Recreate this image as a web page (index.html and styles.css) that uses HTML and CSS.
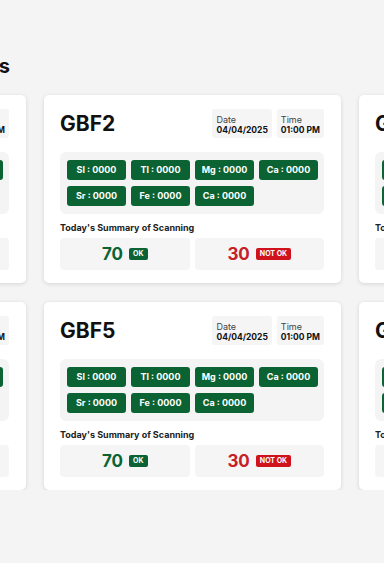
FILE: index.html
```html
<!DOCTYPE html>
<html>
<head>
  <title>Machines</title>
  <link rel="stylesheet" href="styles.css">
</head>
<body>
<div class="page">
  <h2 class="page-title">Machines</h2>

  <div class="cards" id="cards"></div>
</div>

<script>
  const elements = ["Sl", "Tl", "Mg", "Ca", "Sr", "Fe", "Ca"];
  const machines = ["GBF1", "GBF2", "GBF3", "GBF4", "GBF5", "GBF6"];

  function machineCard(name) {
    const chips = elements.map(el => `<div class="chip">${el} : 0000</div>`).join("");
    return `
      <div class="card">
        <div class="card-head">
          <div class="card-title">${name}</div>
          <div class="meta">
            <div class="meta-box"><div class="meta-label">Date</div><div class="meta-value">04/04/2025</div></div>
            <div class="meta-box"><div class="meta-label">Time</div><div class="meta-value">01:00 PM</div></div>
          </div>
        </div>
        <div class="chips">${chips}</div>
        <div class="summary-title">Today's Summary of Scanning</div>
        <div class="summary">
          <div class="summary-box"><span class="count ok">70</span><span class="badge ok-badge">OK</span></div>
          <div class="summary-box"><span class="count bad">30</span><span class="badge bad-badge">NOT OK</span></div>
        </div>
      </div>`;
  }

  document.getElementById("cards").innerHTML = machines.map(machineCard).join("");
</script>
</body>
</html>
```

FILE: styles.css
```css
body {
  font-family: Inter, "Noto Sans", sans-serif;
  margin: 0;
  padding: 0;
  background: #f4f4f4;
  overflow: hidden;
}
.page {
  margin-left: -271px;
  width: 927px;
  padding-top: 54px;
}
.page-title {
  width: 281px;
  text-align: right;
  font-size: 20px;
  line-height: 24px;
  font-weight: 700;
  color: #111;
  margin: 0 0 17px 0;
}
.cards {
  display: grid;
  grid-template-columns: repeat(3, 297px);
  gap: 19px 18px;
}
.card {
  background: #fff;
  border-radius: 5px;
  box-shadow: 0 1px 4px rgba(0, 0, 0, 0.13);
  padding: 14px 17px 13px 16px;
  box-sizing: border-box;
  height: 188px;
}
.card-head {
  display: flex;
  justify-content: space-between;
  align-items: center;
}
.card-title {
  font-size: 21px;
  font-weight: 700;
  color: #111;
}
.meta {
  display: flex;
  gap: 5px;
}
.meta-box {
  background: #f5f5f5;
  border-radius: 3px;
  padding: 5px 4px 2px 4px;
  font-size: 9px;
  line-height: 11px;
}
.meta-label {
  color: #444;
}
.meta-value {
  font-size: 8.5px;
  font-weight: 700;
  color: #111;
}
.chips {
  margin-top: 14px;
  background: #f4f4f4;
  border-radius: 6px;
  padding: 8px 6px 8px 7px;
  display: grid;
  grid-template-columns: repeat(4, 1fr);
  gap: 6px 5px;
}
.chip {
  background: #0b6334;
  color: #fff;
  border-radius: 3px;
  height: 20px;
  line-height: 20px;
  text-align: center;
  font-size: 9px;
  font-weight: 700;
}
.summary-title {
  margin-top: 8px;
  font-size: 9px;
  line-height: 12px;
  font-weight: 700;
  color: #222;
}
.summary {
  margin-top: 4px;
  display: grid;
  grid-template-columns: 1fr 1fr;
  gap: 5px;
}
.summary-box {
  background: #f5f5f5;
  border-radius: 4px;
  height: 32px;
  display: flex;
  align-items: center;
  justify-content: center;
  gap: 6px;
}
.count {
  font-size: 17px;
  font-weight: 700;
}
.count.ok {
  color: #0b6334;
}
.count.bad {
  color: #c62027;
}
.badge {
  font-size: 7px;
  font-weight: 700;
  color: #fff;
  border-radius: 2px;
  padding: 0 4px;
  height: 12px;
  line-height: 12px;
}
.ok-badge {
  background: #0b6334;
}
.bad-badge {
  background: #d0121c;
}
```
